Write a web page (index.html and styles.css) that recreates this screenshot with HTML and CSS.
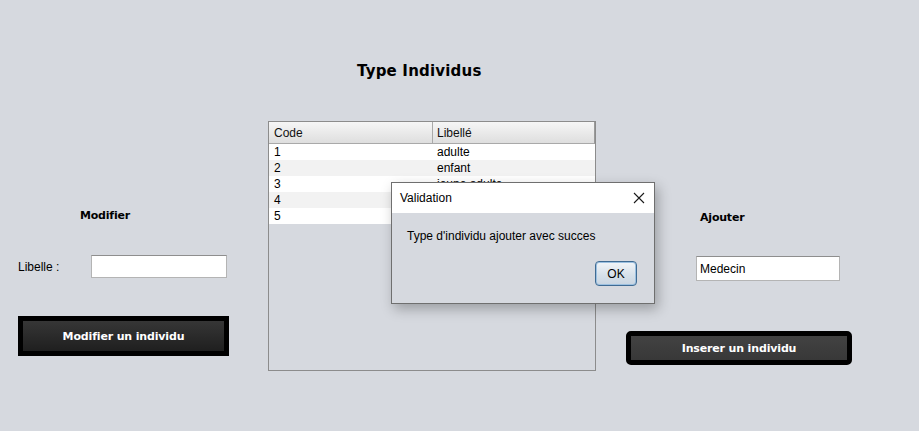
FILE: index.html
```html
<!DOCTYPE html>
<html lang="fr">
<head>
<meta charset="utf-8">
<title>Type Individus</title>
<link rel="stylesheet" href="styles.css">
</head>
<body>
<div class="window">
  <h1 class="title">Type Individus</h1>
  <div class="content">
    <section class="panel panel-left">
      <div class="panel-label label-modifier">Modifier</div>
      <div class="field-row">
        <span class="field-label">Libelle :</span>
        <input class="text-input input-modifier" type="text" value="">
      </div>
      <button class="btn-dark btn-modifier">Modifier un individu</button>
    </section>

    <section class="table-wrap">
      <div class="table">
        <div class="thead">
          <div class="th">Code</div>
          <div class="th">Libellé</div>
        </div>
        <div class="tr"><div class="td">1</div><div class="td">adulte</div></div>
        <div class="tr alt"><div class="td">2</div><div class="td">enfant</div></div>
        <div class="tr"><div class="td">3</div><div class="td">jeune adulte</div></div>
        <div class="tr alt"><div class="td">4</div><div class="td">personne âgée</div></div>
        <div class="tr"><div class="td">5</div><div class="td">adolescent</div></div>
      </div>
    </section>

    <section class="panel panel-right">
      <div class="panel-label label-ajouter">Ajouter</div>
      <input class="text-input input-ajouter" type="text" value="Medecin">
      <button class="btn-dark btn-inserer">Inserer un individu</button>
    </section>
  </div>
</div>

<div class="dialog">
  <div class="dialog-titlebar">
    <span class="dialog-title">Validation</span>
    <svg class="dialog-close" width="12" height="12" viewBox="0 0 12 12">
      <path d="M1 1 L11 11 M11 1 L1 11" stroke="#1a1a1a" stroke-width="1.1" fill="none"/>
    </svg>
  </div>
  <div class="dialog-body">
    <p class="dialog-message">Type d'individu ajouter avec succes</p>
    <div class="dialog-actions">
      <button class="btn-ok">OK</button>
    </div>
  </div>
</div>
</body>
</html>
```
FILE: styles.css
```css
* { box-sizing: border-box; }

html, body {
  margin: 0;
  padding: 0;
}

body {
  width: 919px;
  height: 431px;
  overflow: hidden;
  position: relative;
  background: #d6d9df;
  font-family: "Liberation Sans", Arial, sans-serif;
  font-size: 12px;
  color: #000;
}

.window {
  display: flex;
  flex-direction: column;
}

.title {
  margin: 0;
  padding-top: 62px;
  margin-left: 357px;
  font-family: "DejaVu Sans", sans-serif;
  font-weight: bold;
  font-size: 15px;
  line-height: 18px;
  letter-spacing: 0.2px;
  color: #000;
}

.content {
  display: flex;
  align-items: flex-start;
}

.panel {
  display: flex;
  flex-direction: column;
  align-items: flex-start;
}

.panel-left {
  width: 211px;
  margin-left: 18px;
  margin-top: 129px;
}

.panel-label {
  font-family: "DejaVu Sans", sans-serif;
  font-weight: bold;
  font-size: 11px;
  line-height: 13px;
  letter-spacing: -0.2px;
}

.label-modifier { margin-left: 62px; }

.field-row {
  display: flex;
  align-items: center;
  margin-top: 33px;
  width: 100%;
}

.field-label {
  width: 73px;
  font-size: 12px;
  line-height: 16px;
}

.text-input {
  background: #fff;
  border: 1px solid #b4b4b4;
  border-top-color: #8e8e8e;
  font-family: "Liberation Sans", Arial, sans-serif;
  font-size: 12px;
  padding: 0 3px;
  margin: 0;
  outline: none;
  color: #000;
}

.input-modifier {
  width: 136px;
  height: 23px;
}

.btn-dark {
  font-family: "DejaVu Sans", sans-serif;
  font-weight: bold;
  font-size: 11px;
  letter-spacing: -0.15px;
  color: #fff;
  border: 5px solid #000;
  padding: 0;
  margin: 0;
  cursor: pointer;
}

.btn-modifier {
  margin-top: 38px;
  width: 211px;
  height: 40px;
  background: linear-gradient(to bottom, #363636, #1f1f1f);
}

.table-wrap {
  margin-left: 39px;
  margin-top: 41px;
}

.table {
  width: 328px;
  height: 250px;
  border: 1px solid #8c8c8c;
  background: #d6d9df;
  display: flex;
  flex-direction: column;
}

.thead {
  display: grid;
  grid-template-columns: 163px 163px;
  height: 22px;
  background: linear-gradient(to bottom, #f6f6f6, #dedede);
  border-bottom: 1px solid #a9a9a9;
  border-right: 1px solid #9a9a9a;
}

.th {
  padding-left: 5px;
  padding-top: 1px;
  line-height: 20px;
  font-size: 12px;
  color: #111;
}

.th + .th {
  border-left: 1px solid #a9a9a9;
  padding-left: 4px;
}

.tr {
  display: grid;
  grid-template-columns: 163px 163px;
  height: 16px;
  background: #fff;
}

.tr.alt { background: #f2f2f2; }

.td {
  padding-left: 5px;
  padding-top: 1px;
  line-height: 15px;
  font-size: 12px;
}

.td + .td { padding-left: 5px; }

.panel-right {
  width: 226px;
  margin-left: 30px;
  margin-top: 131px;
}

.label-ajouter { margin-left: 74px; }

.input-ajouter {
  margin-top: 32px;
  margin-left: 70px;
  width: 144px;
  height: 25px;
}

.btn-inserer {
  margin-top: 50px;
  width: 226px;
  height: 34px;
  border-radius: 5px;
  background: linear-gradient(to bottom, #424242, #383838);
}

/* Dialog */
.dialog {
  position: absolute;
  left: 391px;
  top: 182px;
  width: 264px;
  height: 122px;
  border: 1px solid #6f6f6f;
  background: #d6d9df;
  box-shadow: 3px 5px 12px rgba(0, 0, 0, 0.28);
  display: flex;
  flex-direction: column;
}

.dialog-titlebar {
  height: 30px;
  background: #fff;
  display: flex;
  align-items: center;
  justify-content: space-between;
  padding: 0 9px 0 8px;
}

.dialog-title {
  font-size: 12px;
  line-height: 16px;
}

.dialog-close { display: block; }

.dialog-body {
  flex: 1;
  display: flex;
  flex-direction: column;
  padding: 15px 17px 17px 15px;
}

.dialog-message {
  margin: 0;
  font-size: 12px;
  line-height: 16px;
}

.dialog-actions {
  margin-top: auto;
  display: flex;
  justify-content: flex-end;
}

.btn-ok {
  width: 42px;
  height: 25px;
  margin: 0;
  padding: 0;
  border: 1px solid #3f6b93;
  border-radius: 4px;
  background: linear-gradient(to bottom, #f2f5f8, #d7e1ea 55%, #c9d5e1);
  box-shadow: inset 0 0 0 1px #9cc0e0;
  font-family: "Liberation Sans", Arial, sans-serif;
  font-size: 12px;
  color: #000;
}
```
